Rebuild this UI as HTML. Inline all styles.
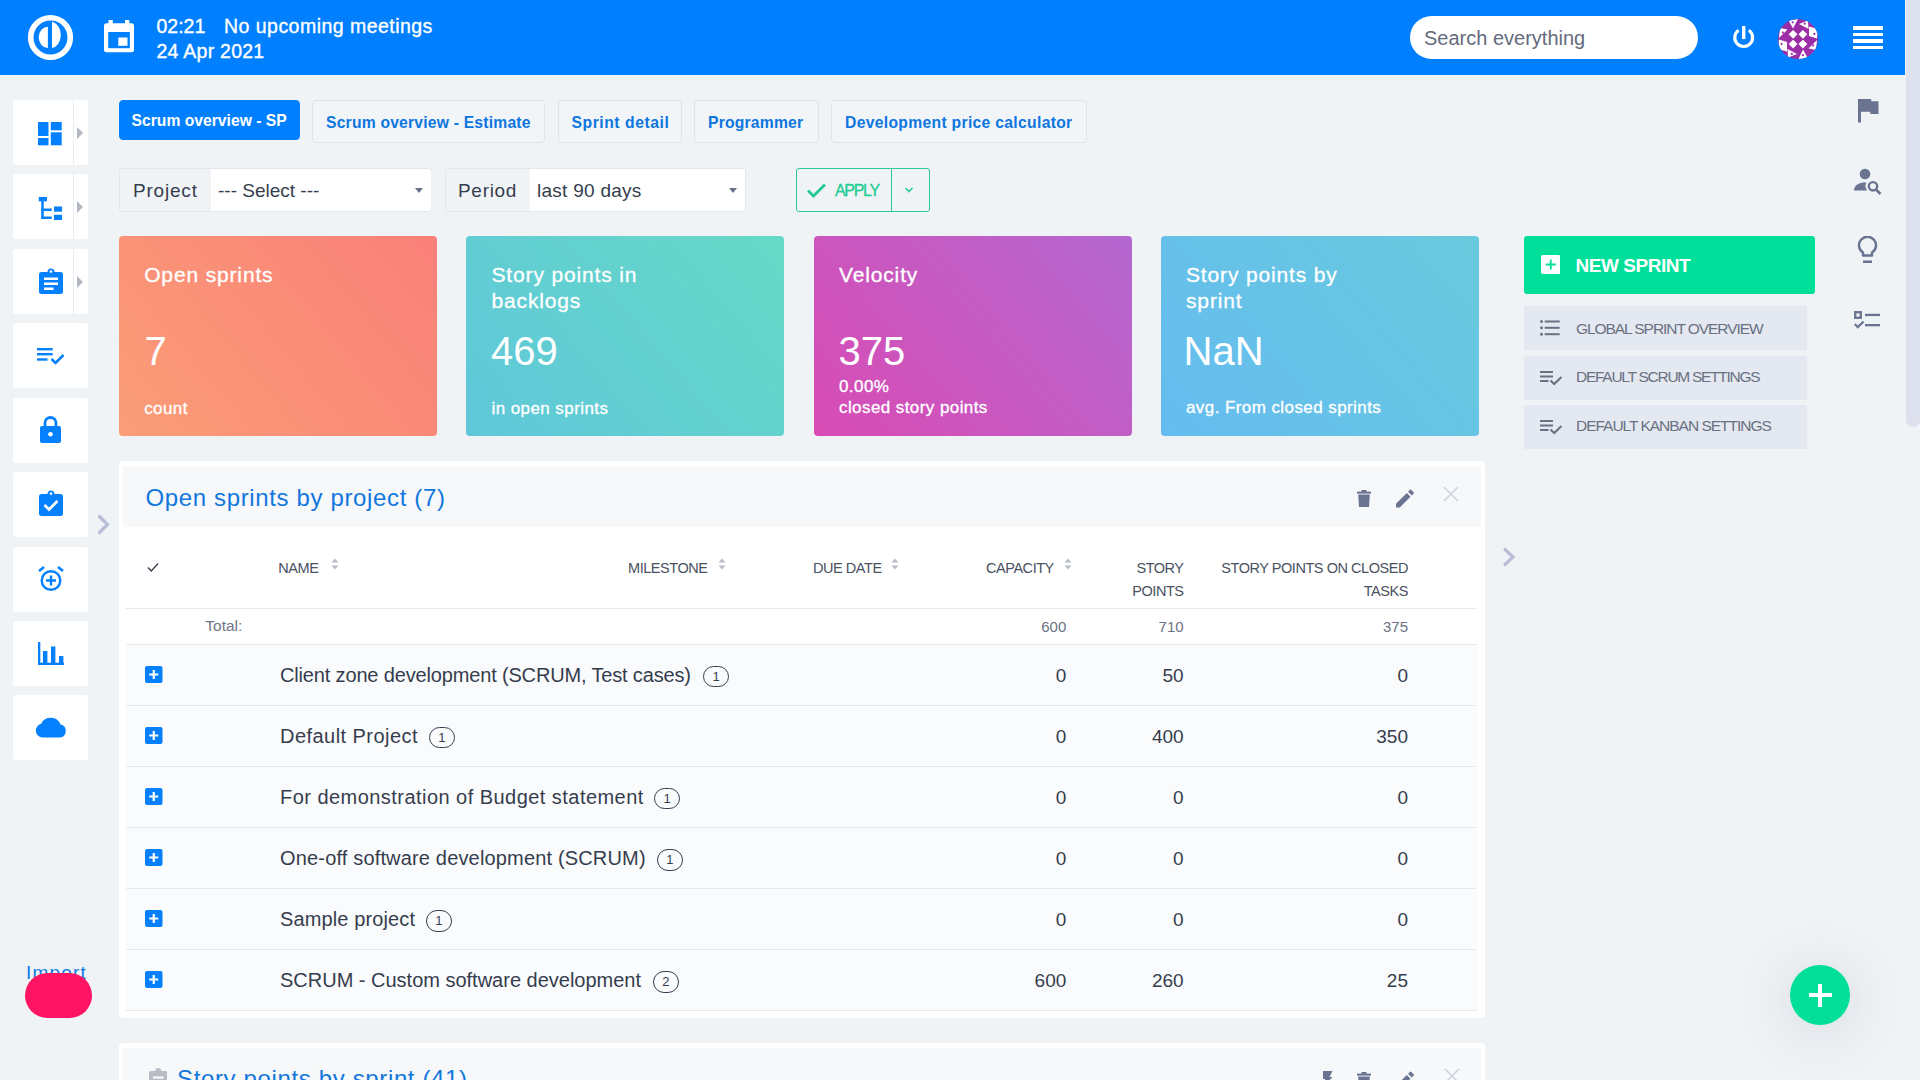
<!DOCTYPE html>
<html><head><meta charset="utf-8">
<style>
*{box-sizing:border-box;margin:0;padding:0}
html,body{width:1920px;height:1080px;overflow:hidden}
body{background:#eff3f6;font-family:"Liberation Sans",sans-serif;position:relative;color:#353d4d}
.abs{position:absolute}
.t{position:absolute;line-height:1;white-space:nowrap;top:calc(var(--b) - 0.847em)}
.r{transform:translateX(-100%)}
#hdr{position:absolute;left:0;top:0;width:1905px;height:75px;background:#0080ff}
#sbt{position:absolute;left:1906px;top:0;width:14px;height:427px;background:#dde0ed;border-radius:0 0 7px 7px}
.hw{color:#fff;font-size:19.5px;-webkit-text-stroke:0.35px #fff}
.search{position:absolute;left:1410px;top:16px;width:288px;height:43px;background:#fff;border-radius:22px}
.tile{position:absolute;left:13px;width:75px;height:65px;background:#fff;border-radius:3px}
.tile .dv{position:absolute;left:60px;top:0;width:1px;height:65px;background:#e9ecf0}
.tile .arr{position:absolute;left:64px;top:27px;width:0;height:0;border-left:6px solid #b4b8c4;border-top:6px solid transparent;border-bottom:6px solid transparent}
.tile svg{position:absolute}
.tab{position:absolute;top:100px;height:43px;border:1px solid #dfe3e9;border-radius:4px;background:#f2f5f8}
.tab.act{background:#0080ff;border-color:#0080ff;height:40px}
.tabt{font-weight:bold;font-size:15.7px;color:#0d76e0;--b:126.3px}
.card{position:absolute;top:236px;width:318px;height:200px;border-radius:4px}
.cw{color:#fff;-webkit-text-stroke:0.3px #fff}
.ct{font-size:21px;letter-spacing:0.85px}
.cv{font-size:40px;--b:365.3px;-webkit-text-stroke:0}
.cs{font-size:17px;letter-spacing:0.42px}
.flt{position:absolute;top:168px;height:44px;background:#f1f4f7;border:1px solid #e3e7ec;border-radius:3px}
.sel{position:absolute;top:169px;height:42px;background:#fff;border-radius:0 3px 3px 0}
.caret{position:absolute;width:0;height:0;border-top:5px solid #67718a;border-left:4.5px solid transparent;border-right:4.5px solid transparent}
.ft{font-size:19px;color:#353d4d;--b:197px}
.rmi{position:absolute;left:1524px;width:283px;height:44px;background:#e4e8f0}
.rmt{font-size:15.5px;color:#697183;letter-spacing:-0.95px}
.ri svg{position:absolute}
.th{font-size:14.5px;color:#4a5162;letter-spacing:-0.45px}
.tot{font-size:15.5px;color:#6e7687}
.totn{font-size:15px;color:#6b7282}
.rn{font-size:20px;color:#353d4d;letter-spacing:0.1px}
.rv{font-size:19px;color:#353d4d}
.bdg{position:absolute;font-size:13px;border:1.2px solid #353d4d;border-radius:11px;width:25.5px;height:21.5px;text-align:center;line-height:20px;color:#353d4d}

</style></head><body>
<div id="hdr"></div>
<svg class="abs" style="left:27px;top:14px" width="47" height="47" viewBox="0 0 47 47">
  <circle cx="23.5" cy="23.5" r="19.8" fill="none" stroke="#fff" stroke-width="5.6"/>
  <path d="M20.9 12.7 A9.2 10.65 0 0 0 20.9 34 Z" fill="#fff"/>
  <path d="M25 7.8 L25 34 A9.8 13.1 0 0 0 25.8 8.1 Z" fill="#fff"/>
</svg>
<svg class="abs" style="left:104px;top:20px" width="30" height="33" viewBox="0 0 30 33">
  <rect x="4.5" y="0" width="4.3" height="5" fill="#fff"/>
  <rect x="21" y="0" width="4.3" height="5" fill="#fff"/>
  <rect x="0" y="3.2" width="30" height="29" rx="2.5" fill="#fff"/>
  <rect x="4.2" y="12" width="21.7" height="16.2" fill="#0080ff"/>
  <rect x="14.3" y="17.5" width="9.2" height="8.3" fill="#fff"/>
</svg>
<div class="t hw" style="left:156.5px;--b:33.2px">02:21</div>
<div class="t hw" style="left:224px;--b:33.2px;letter-spacing:0.47px">No upcoming meetings</div>
<div class="t hw" style="left:156.5px;--b:58.2px;letter-spacing:0.25px">24 Apr 2021</div>
<div class="search"></div>
<div class="t" style="left:1424px;--b:45px;font-size:20px;color:#646b7c">Search everything</div>
<!-- power -->
<svg class="abs" style="left:1730px;top:22px" width="28" height="30" viewBox="0 0 28 30">
  <path d="M8.60 8.31 A8.9 8.9 0 1 0 18.80 8.31" fill="none" stroke="#fff" stroke-width="3.2"/>
  <rect x="12" y="4" width="3.4" height="13.1" fill="#fff"/>
</svg>
<!-- avatar -->
<svg class="abs" style="left:1778px;top:19px" width="40" height="40" viewBox="0 0 40 40">
  <defs><clipPath id="av"><circle cx="20" cy="20" r="20"/></clipPath></defs>
  <g clip-path="url(#av)">
    <rect width="40" height="40" fill="#9b2ea7"/>
    <g fill="#fff">
      <path d="M15.1 10.9 L19.5 15.3 L15.1 19.7 L10.7 15.3Z"/><path d="M24.9 10.9 L29.3 15.3 L24.9 19.7 L20.5 15.3Z"/>
      <path d="M15.1 20.7 L19.5 25.1 L15.1 29.5 L10.7 25.1Z"/><path d="M24.9 20.7 L29.3 25.1 L24.9 29.5 L20.5 25.1Z"/>
      <path d="M10.5 1.5 L20 0 L15 9.5Z"/>
      <path d="M21 5 L30 1.5 L30.5 10Z"/>
      <path d="M31 7.5 L40 10 L39 19.5 L31 17Z"/>
      <path d="M39 21 L30.5 29.5 L38 31Z"/>
      <path d="M30 39.5 L20.5 40 L25 30.5Z"/>
      <path d="M19 35 L10 38.5 L9.5 30Z"/>
      <path d="M9 32.5 L0 30 L1 20.5 L9 23Z"/>
      <path d="M1 19 L9.5 10.5 L2 9Z"/>
    </g>
    <g fill="#9b2ea7">
      <circle cx="14.7" cy="3.3" r="1.1"/><circle cx="26.7" cy="4.7" r="1.1"/><circle cx="36.4" cy="14.9" r="1.1"/><circle cx="35.1" cy="26.4" r="1.1"/>
      <circle cx="24.9" cy="36.2" r="1.1"/><circle cx="13.8" cy="34.9" r="1.1"/><circle cx="3.6" cy="25.1" r="1.1"/><circle cx="4.9" cy="13.6" r="1.1"/>
    </g>
  </g>
</svg>
<!-- hamburger -->
<div class="abs" style="left:1853px;top:26px;width:30px;height:3.6px;background:#fff"></div>
<div class="abs" style="left:1853px;top:32.5px;width:30px;height:3.6px;background:#fff"></div>
<div class="abs" style="left:1853px;top:39px;width:30px;height:3.6px;background:#fff"></div>
<div class="abs" style="left:1853px;top:45.5px;width:30px;height:3.6px;background:#fff"></div>

<div id="sbt"></div>

<!-- SIDEBAR -->
<div class="tile" style="top:100px"><div class="dv"></div><div class="arr"></div>
  <svg style="left:25px;top:21.7px" width="24" height="24" viewBox="0 0 24 24"><g fill="#0580fc"><rect x="0" y="0" width="10.5" height="14"/><rect x="0" y="16" width="10.5" height="7.3"/><rect x="12.8" y="0" width="10.9" height="8.3"/><rect x="12.8" y="10.3" width="10.9" height="13"/></g></svg>
</div>
<div class="tile" style="top:174px"><div class="dv"></div><div class="arr"></div>
  <svg style="left:25px;top:23px" width="25" height="23" viewBox="0 0 25 23"><g fill="#0580fc"><rect x="0.75" y="0" width="8.25" height="4.3"/><rect x="3.25" y="4" width="2.5" height="18"/><rect x="3.25" y="11.5" width="10.5" height="2.5"/><rect x="3.25" y="19.5" width="10.5" height="2.5"/><rect x="16" y="9.5" width="8" height="5.2"/><rect x="16" y="17.8" width="8" height="5.2"/></g></svg>
</div>
<div class="tile" style="top:249px"><div class="dv"></div><div class="arr"></div>
  <svg style="left:25.75px;top:19px" width="24" height="26" viewBox="0 0 24 26"><path d="M2.5 4 H8.5 A3.5 3.5 0 0 1 15.5 4 H21.5 A2.5 2.5 0 0 1 24 6.5 V23.5 A2.5 2.5 0 0 1 21.5 26 H2.5 A2.5 2.5 0 0 1 0 23.5 V6.5 A2.5 2.5 0 0 1 2.5 4Z" fill="#0580fc"/><circle cx="12" cy="3.6" r="1.3" fill="#fff"/><g fill="#fff"><rect x="5" y="9.5" width="14" height="2.5"/><rect x="5" y="14.5" width="14" height="2.5"/><rect x="5" y="19.5" width="9.5" height="2.5"/></g></svg>
</div>
<div class="tile" style="top:323px">
  <svg style="left:24px;top:25px" width="28" height="17" viewBox="0 0 28 17"><g fill="#0580fc"><rect x="0" y="0" width="15.7" height="2.4"/><rect x="0" y="5" width="15.7" height="2.4"/><rect x="0" y="10.3" width="10.5" height="2.4"/></g><path d="M14.5 11 L18.5 15 L26.5 7" fill="none" stroke="#0580fc" stroke-width="2.5"/></svg>
</div>
<div class="tile" style="top:398px">
  <svg style="left:27px;top:18px" width="21" height="27" viewBox="0 0 21 27"><path d="M5 10 V7 A5.5 5.5 0 0 1 16 7 V10" fill="none" stroke="#0580fc" stroke-width="2.8"/><rect x="0" y="10" width="21" height="17" rx="2" fill="#0580fc"/><circle cx="10.5" cy="18.2" r="2.3" fill="#fff"/></svg>
</div>
<div class="tile" style="top:472px">
  <svg style="left:25.75px;top:17.9px" width="24" height="26" viewBox="0 0 24 26"><path d="M2.5 4 H8.5 A3.5 3.5 0 0 1 15.5 4 H21.5 A2.5 2.5 0 0 1 24 6.5 V23.5 A2.5 2.5 0 0 1 21.5 26 H2.5 A2.5 2.5 0 0 1 0 23.5 V6.5 A2.5 2.5 0 0 1 2.5 4Z" fill="#0580fc"/><circle cx="12" cy="3.6" r="1.3" fill="#fff"/><path d="M5.5 15 L10 19.5 L18.5 11" fill="none" stroke="#fff" stroke-width="2.7"/></svg>
</div>
<div class="tile" style="top:547px">
  <svg style="left:25px;top:18.6px" width="26" height="26" viewBox="0 0 26 26"><circle cx="13" cy="14.5" r="9.3" fill="none" stroke="#0580fc" stroke-width="2.4"/><path d="M1 5 L6 1" stroke="#0580fc" stroke-width="2.6"/><path d="M25 5 L20 1" stroke="#0580fc" stroke-width="2.6"/><path d="M13 9.5 V19.5 M8 14.5 H18" stroke="#0580fc" stroke-width="2.4"/></svg>
</div>
<div class="tile" style="top:621px">
  <svg style="left:24.7px;top:21px" width="26" height="23" viewBox="0 0 26 23"><g fill="#0580fc"><rect x="0" y="0" width="2.3" height="23"/><rect x="0" y="20.7" width="26" height="2.3"/><rect x="5" y="9" width="4.4" height="13"/><rect x="13" y="4.5" width="4.4" height="17"/><rect x="21" y="14" width="4.4" height="8"/></g></svg>
</div>
<div class="tile" style="top:695px">
  <svg style="left:22px;top:21px" width="32" height="22" viewBox="0 0 32 22"><path d="M7.5 21.5 A7 7 0 0 1 6.2 7.7 A10.5 10.5 0 0 1 25.5 8.5 A6.6 6.6 0 0 1 25 21.5 Z" fill="#0580fc"/></svg>
</div>
<svg class="abs" style="left:96px;top:513px" width="16" height="23" viewBox="0 0 16 23"><path d="M3.5 3.5 L11.5 11.5 L3.5 19.5" fill="none" stroke="#b9bdd8" stroke-width="3.2" stroke-linecap="round"/></svg>
<svg class="abs" style="left:1501px;top:546px" width="17" height="22" viewBox="0 0 17 22"><path d="M4 3.5 L12 11 L4 18.5" fill="none" stroke="#b9bdd8" stroke-width="3.2" stroke-linecap="round"/></svg>
<div class="t" style="left:26px;--b:979px;font-size:19px;color:#0d7ae8;letter-spacing:1.2px">Import</div>
<div class="abs" style="left:25px;top:973px;width:67px;height:45px;border-radius:23px;background:#ff1463"></div>
<div class="abs" style="left:1790px;top:965px;width:60px;height:60px;border-radius:30px;background:#03df99;box-shadow:0 6px 60px rgba(40,50,70,0.15)"></div>
<div class="abs" style="left:1808.5px;top:993.2px;width:23px;height:3.7px;background:#fff"></div>
<div class="abs" style="left:1818.2px;top:983.5px;width:3.7px;height:23px;background:#fff"></div>


<!-- TABS -->
<div class="tab act" style="left:119px;width:181px"></div>
<div class="t tabt" style="left:131.5px;color:#fff">Scrum overview - SP</div>
<div class="tab" style="left:312px;width:233px"></div>
<div class="t tabt" style="--b:128px;left:326px;letter-spacing:0.2px">Scrum overview - Estimate</div>
<div class="tab" style="left:558px;width:124px"></div>
<div class="t tabt" style="--b:128px;left:571.5px;letter-spacing:0.55px">Sprint detail</div>
<div class="tab" style="left:694px;width:125px"></div>
<div class="t tabt" style="--b:128px;left:708px;letter-spacing:0.2px">Programmer</div>
<div class="tab" style="left:831px;width:256px"></div>
<div class="t tabt" style="--b:128px;left:845px;letter-spacing:0.31px">Development price calculator</div>

<!-- FILTERS -->
<div class="flt" style="left:119px;width:312px"></div>
<div class="sel" style="left:210.5px;width:220px"></div>
<div class="t ft" style="left:133px;letter-spacing:0.8px">Project</div>
<div class="t ft" style="left:218px">--- Select ---</div>
<div class="caret" style="left:414.5px;top:187.5px"></div>
<div class="flt" style="left:444.5px;width:301px"></div>
<div class="sel" style="left:530px;width:215px"></div>
<div class="t ft" style="left:458px;letter-spacing:0.7px">Period</div>
<div class="t ft" style="left:537px;letter-spacing:0.27px">last 90 days</div>
<div class="caret" style="left:729px;top:187.5px"></div>
<div class="abs" style="left:796px;top:168px;width:134px;height:44px;border:1.3px solid #2cc996;border-radius:3px"></div>
<div class="abs" style="left:891px;top:168px;width:1.3px;height:44px;background:#2cc996"></div>
<svg class="abs" style="left:806px;top:182px" width="21" height="17" viewBox="0 0 21 17"><path d="M2 8.5 L7.5 14 L19 2.5" fill="none" stroke="#23c891" stroke-width="2.8"/></svg>
<div class="t" style="left:835px;--b:197px;font-size:16px;color:#22cc92;letter-spacing:-1.3px;-webkit-text-stroke:0.3px #22cc92">APPLY</div>
<svg class="abs" style="left:904px;top:186px" width="10" height="8" viewBox="0 0 10 8"><path d="M1.5 2 L5 5.5 L8.5 2" fill="none" stroke="#2bc994" stroke-width="1.6"/></svg>

<!-- CARDS -->
<div class="card" style="left:119px;background:linear-gradient(50deg,#fa9d76,#fa8079)"></div>
<div class="t cw ct" style="left:144.2px;--b:281.8px">Open sprints</div>
<div class="t cw cv" style="left:144.5px">7</div>
<div class="t cw cs" style="left:144.2px;--b:414px">count</div>

<div class="card" style="left:466px;background:linear-gradient(50deg,#5fc7da,#66d9c6)"></div>
<div class="t cw ct" style="left:491.5px;--b:281.8px">Story points in</div>
<div class="t cw ct" style="left:491.5px;--b:308px">backlogs</div>
<div class="t cw cv" style="left:491px">469</div>
<div class="t cw cs" style="left:491.5px;--b:414px">in open sprints</div>

<div class="card" style="left:814px;background:linear-gradient(50deg,#d94bb4,#b468d0)"></div>
<div class="t cw ct" style="left:839px;--b:281.8px">Velocity</div>
<div class="t cw cv" style="left:838.5px">375</div>
<div class="t cw cs" style="left:839px;--b:392.4px">0.00%</div>
<div class="t cw cs" style="left:839px;--b:413.5px">closed story points</div>

<div class="card" style="left:1161px;background:linear-gradient(50deg,#65bcf0,#68cadd)"></div>
<div class="t cw ct" style="left:1186px;--b:281.8px">Story points by</div>
<div class="t cw ct" style="left:1186px;--b:308px">sprint</div>
<div class="t cw cv" style="left:1183.5px">NaN</div>
<div class="t cw cs" style="left:1186px;--b:413.5px">avg. From closed sprints</div>

<!-- RIGHT MENU -->
<div class="abs" style="left:1524px;top:236px;width:291px;height:58px;background:#00df9a;border-radius:3px"></div>
<svg class="abs" style="left:1540.5px;top:255px" width="19.5" height="19" viewBox="0 0 19.5 19"><rect width="19.5" height="19" rx="2" fill="#fff"/><path d="M9.75 4.5 V14.5 M4.75 9.5 H14.75" stroke="#00df9a" stroke-width="1.8"/></svg>
<div class="t" style="left:1575.5px;--b:272px;font-size:19px;font-weight:bold;color:#fff;letter-spacing:-0.45px">NEW SPRINT</div>
<div class="rmi" style="top:306px"></div>
<div class="rmi" style="top:355.5px"></div>
<div class="rmi" style="top:404.5px"></div>
<svg class="abs" style="left:1540px;top:320px" width="20" height="16" viewBox="0 0 20 16"><g fill="#697183"><circle cx="1.5" cy="1.5" r="1.5"/><circle cx="1.5" cy="7.8" r="1.5"/><circle cx="1.5" cy="14.2" r="1.5"/><rect x="4.7" y="0.5" width="15" height="2"/><rect x="4.7" y="6.8" width="15" height="2"/><rect x="4.7" y="13.2" width="15" height="2"/></g></svg>
<div class="t rmt" style="left:1576px;--b:334.4px;letter-spacing:-1.06px">GLOBAL SPRINT OVERVIEW</div>
<svg class="abs" style="left:1539.5px;top:371px" width="23" height="15" viewBox="0 0 23 15"><g fill="#697183"><rect x="0" y="0" width="13" height="2"/><rect x="0" y="4.5" width="13" height="2"/><rect x="0" y="9" width="8.5" height="2"/></g><path d="M10.5 9.5 L14.2 13 L21.5 6" fill="none" stroke="#697183" stroke-width="2"/></svg>
<div class="t rmt" style="left:1576px;--b:382.1px;letter-spacing:-1.27px">DEFAULT SCRUM SETTINGS</div>
<svg class="abs" style="left:1539.5px;top:420px" width="23" height="15" viewBox="0 0 23 15"><g fill="#697183"><rect x="0" y="0" width="13" height="2"/><rect x="0" y="4.5" width="13" height="2"/><rect x="0" y="9" width="8.5" height="2"/></g><path d="M10.5 9.5 L14.2 13 L21.5 6" fill="none" stroke="#697183" stroke-width="2"/></svg>
<div class="t rmt" style="left:1576px;--b:430.8px;letter-spacing:-1.02px">DEFAULT KANBAN SETTINGS</div>
<!-- right icons -->
<svg class="abs" style="left:1858px;top:99px" width="21" height="24" viewBox="0 0 21 24"><path d="M0 0 H13 L13.5 2.2 H20.5 V15 H12.5 L12 12.8 H3 V23.5 H0 Z" fill="#6a7491"/></svg>
<svg class="abs" style="left:1854px;top:168px" width="28" height="27" viewBox="0 0 28 27"><g fill="#6a7491"><circle cx="11" cy="6" r="5.3"/><path d="M0 22.5 C0 17 5.5 14.5 11 14.5 C11.5 14.5 12 14.5 12.5 14.6 A7 7 0 0 0 13.2 22.5 Z"/></g><circle cx="19" cy="18.3" r="4.2" fill="none" stroke="#6a7491" stroke-width="2.4"/><path d="M22 21.5 L26.5 26" stroke="#6a7491" stroke-width="2.6"/></svg>
<svg class="abs" style="left:1857px;top:236px" width="21" height="28" viewBox="0 0 21 28"><path d="M6 19.5 V16.5 A8.5 8.5 0 1 1 15 16.5 V19.5 Z" fill="none" stroke="#6a7491" stroke-width="2.5" stroke-linejoin="round"/><rect x="6" y="24.5" width="9" height="2.5" fill="#6a7491"/></svg>
<svg class="abs" style="left:1854px;top:310.5px" width="26" height="19" viewBox="0 0 26 19"><rect x="1.2" y="1.2" width="5.6" height="5.6" fill="none" stroke="#6a7491" stroke-width="2.3"/><rect x="11" y="2.8" width="15" height="2.3" fill="#6a7491"/><rect x="11" y="13" width="15" height="2.3" fill="#6a7491"/><path d="M0.8 13 L3.8 16.2 L9.5 10.5" fill="none" stroke="#6a7491" stroke-width="2.3"/></svg>


<!-- MODULE -->
<div class="abs" style="left:119px;top:461px;width:1366px;height:557px;background:#fff;border-radius:4px"></div>
<div class="abs" style="left:123px;top:466px;width:1358px;height:61px;background:#f6f8fa"></div>
<div class="abs" style="left:123px;top:527px;width:1358px;height:81px;background:#fff"></div>
<div class="abs" style="left:123px;top:608px;width:1358px;height:406px;background:#fff"></div>
<div class="abs" style="left:126px;top:645px;width:1351px;height:366px;background:#fafbfd"></div>
<div class="t" style="left:145.5px;--b:506.3px;font-size:24px;color:#1277dd;letter-spacing:0.64px">Open sprints by project (7)</div>
<svg class="abs" style="left:1357px;top:489.5px" width="14" height="17" viewBox="0 0 14 17"><g fill="#6a7491"><rect x="0" y="1.6" width="14" height="2"/><rect x="4.5" y="0" width="5" height="2"/><path d="M1.2 4.5 H12.8 L12 17 H2 Z"/></g></svg>
<svg class="abs" style="left:1396px;top:489px" width="19" height="19" viewBox="0 0 19 19"><path d="M0 14.8 V18.5 H3.7 L14.5 7.7 L10.8 4 Z M17.6 4.6 A1 1 0 0 0 17.6 3.2 L15.3 0.9 A1 1 0 0 0 13.9 0.9 L12.1 2.7 L15.8 6.4 Z" fill="#6a7491"/></svg>
<svg class="abs" style="left:1443px;top:485.5px" width="16" height="16" viewBox="0 0 16 16"><path d="M1 1 L15 15 M15 1 L1 15" stroke="#cdd2de" stroke-width="1.5"/></svg>
<div class="abs" style="left:126px;top:608px;width:1351px;height:1px;background:#e6e9ee"></div>
<div class="abs" style="left:126px;top:644px;width:1351px;height:1px;background:#e6e9ee"></div>
<svg class="abs" style="left:147px;top:562px" width="12" height="11" viewBox="0 0 12 11"><path d="M1 5.5 L4.3 9 L11 1.5" fill="none" stroke="#3a4150" stroke-width="1.4"/></svg>
<div class="t th" style="left:278.3px;--b:573.5px">NAME</div>
<svg class="abs" style="left:330.5px;top:557.6px" width="8" height="12" viewBox="0 0 8 12"><path d="M0.5 4.5 L4 0.5 L7.5 4.5Z M0.5 7.5 L4 11.5 L7.5 7.5Z" fill="#b9bdc8"/></svg>
<div class="t th" style="left:628px;--b:573.5px">MILESTONE</div>
<svg class="abs" style="left:718px;top:557.6px" width="8" height="12" viewBox="0 0 8 12"><path d="M0.5 4.5 L4 0.5 L7.5 4.5Z M0.5 7.5 L4 11.5 L7.5 7.5Z" fill="#b9bdc8"/></svg>
<div class="t th" style="left:813px;--b:573.5px">DUE DATE</div>
<svg class="abs" style="left:891px;top:557.6px" width="8" height="12" viewBox="0 0 8 12"><path d="M0.5 4.5 L4 0.5 L7.5 4.5Z M0.5 7.5 L4 11.5 L7.5 7.5Z" fill="#b9bdc8"/></svg>
<div class="t th" style="left:986px;--b:573.5px">CAPACITY</div>
<svg class="abs" style="left:1064px;top:557.6px" width="8" height="12" viewBox="0 0 8 12"><path d="M0.5 4.5 L4 0.5 L7.5 4.5Z M0.5 7.5 L4 11.5 L7.5 7.5Z" fill="#b9bdc8"/></svg>
<div class="t r th" style="left:1183.6px;--b:573.5px">STORY</div>
<div class="t r th" style="left:1183.6px;--b:596.5px">POINTS</div>
<div class="t r th" style="left:1408px;--b:573.5px">STORY POINTS ON CLOSED</div>
<div class="t r th" style="left:1408px;--b:596.5px">TASKS</div>
<div class="t tot" style="left:205.3px;--b:631.5px">Total:</div>
<div class="t r totn" style="left:1066.3px;--b:631.4px">600</div>
<div class="t r totn" style="left:1183.6px;--b:631.4px">710</div>
<div class="t r totn" style="left:1408px;--b:631.4px">375</div>
<div class="abs" style="left:126px;top:705px;width:1351px;height:1px;background:#e6e9ee"></div>
<svg class="abs" style="left:145.2px;top:665.9px" width="17.5" height="17" viewBox="0 0 17.5 17"><rect width="17.5" height="17" rx="2" fill="#0580fc"/><path d="M8.75 4 V13 M4.25 8.5 H13.25" stroke="#fff" stroke-width="2.2"/></svg>
<div class="t rn" style="left:280px;--b:681.9px;letter-spacing:-0.157px">Client zone development (SCRUM, Test cases)</div><div class="bdg" style="left:703.3px;top:665.7px">1</div>
<div class="t r rv" style="left:1066.3px;--b:681.9px">0</div>
<div class="t r rv" style="left:1183.6px;--b:681.9px">50</div>
<div class="t r rv" style="left:1408px;--b:681.9px">0</div>
<div class="abs" style="left:126px;top:766px;width:1351px;height:1px;background:#e6e9ee"></div>
<svg class="abs" style="left:145.2px;top:727.0px" width="17.5" height="17" viewBox="0 0 17.5 17"><rect width="17.5" height="17" rx="2" fill="#0580fc"/><path d="M8.75 4 V13 M4.25 8.5 H13.25" stroke="#fff" stroke-width="2.2"/></svg>
<div class="t rn" style="left:280px;--b:743.0px;letter-spacing:0.452px">Default Project</div><div class="bdg" style="left:429.2px;top:726.8px">1</div>
<div class="t r rv" style="left:1066.3px;--b:743.0px">0</div>
<div class="t r rv" style="left:1183.6px;--b:743.0px">400</div>
<div class="t r rv" style="left:1408px;--b:743.0px">350</div>
<div class="abs" style="left:126px;top:827px;width:1351px;height:1px;background:#e6e9ee"></div>
<svg class="abs" style="left:145.2px;top:788.1px" width="17.5" height="17" viewBox="0 0 17.5 17"><rect width="17.5" height="17" rx="2" fill="#0580fc"/><path d="M8.75 4 V13 M4.25 8.5 H13.25" stroke="#fff" stroke-width="2.2"/></svg>
<div class="t rn" style="left:280px;--b:804.1px;letter-spacing:0.457px">For demonstration of Budget statement</div><div class="bdg" style="left:654.3px;top:787.9px">1</div>
<div class="t r rv" style="left:1066.3px;--b:804.1px">0</div>
<div class="t r rv" style="left:1183.6px;--b:804.1px">0</div>
<div class="t r rv" style="left:1408px;--b:804.1px">0</div>
<div class="abs" style="left:126px;top:888px;width:1351px;height:1px;background:#e6e9ee"></div>
<svg class="abs" style="left:145.2px;top:849.2px" width="17.5" height="17" viewBox="0 0 17.5 17"><rect width="17.5" height="17" rx="2" fill="#0580fc"/><path d="M8.75 4 V13 M4.25 8.5 H13.25" stroke="#fff" stroke-width="2.2"/></svg>
<div class="t rn" style="left:280px;--b:865.2px;letter-spacing:0.166px">One-off software development (SCRUM)</div><div class="bdg" style="left:657.2px;top:849.0px">1</div>
<div class="t r rv" style="left:1066.3px;--b:865.2px">0</div>
<div class="t r rv" style="left:1183.6px;--b:865.2px">0</div>
<div class="t r rv" style="left:1408px;--b:865.2px">0</div>
<div class="abs" style="left:126px;top:949px;width:1351px;height:1px;background:#e6e9ee"></div>
<svg class="abs" style="left:145.2px;top:910.3px" width="17.5" height="17" viewBox="0 0 17.5 17"><rect width="17.5" height="17" rx="2" fill="#0580fc"/><path d="M8.75 4 V13 M4.25 8.5 H13.25" stroke="#fff" stroke-width="2.2"/></svg>
<div class="t rn" style="left:280px;--b:926.3px;letter-spacing:0.123px">Sample project</div><div class="bdg" style="left:426px;top:910.1px">1</div>
<div class="t r rv" style="left:1066.3px;--b:926.3px">0</div>
<div class="t r rv" style="left:1183.6px;--b:926.3px">0</div>
<div class="t r rv" style="left:1408px;--b:926.3px">0</div>
<div class="abs" style="left:126px;top:1010px;width:1351px;height:1px;background:#e6e9ee"></div>
<svg class="abs" style="left:145.2px;top:971.4px" width="17.5" height="17" viewBox="0 0 17.5 17"><rect width="17.5" height="17" rx="2" fill="#0580fc"/><path d="M8.75 4 V13 M4.25 8.5 H13.25" stroke="#fff" stroke-width="2.2"/></svg>
<div class="t rn" style="left:280px;--b:987.4px;letter-spacing:-0.007px">SCRUM - Custom software development</div><div class="bdg" style="left:653px;top:971.2px">2</div>
<div class="t r rv" style="left:1066.3px;--b:987.4px">600</div>
<div class="t r rv" style="left:1183.6px;--b:987.4px">260</div>
<div class="t r rv" style="left:1408px;--b:987.4px">25</div>
<div class="abs" style="left:119px;top:1043px;width:1366px;height:100px;background:#fff;border-radius:4px"></div>
<div class="abs" style="left:123px;top:1048px;width:1358px;height:40px;background:#f6f8fa"></div>
<svg class="abs" style="left:148.5px;top:1067.5px" width="18.5" height="20" viewBox="0 0 18.5 20"><path d="M2 3 H6.2 A3 3 0 0 1 12.2 3 H16.5 A2 2 0 0 1 18.5 5 V20 H0 V5 A2 2 0 0 1 2 3Z" fill="#b9bcc4"/><g fill="#fff"><rect x="4" y="8.5" width="10.5" height="2"/><rect x="4" y="12.5" width="10.5" height="2"/></g></svg>
<div class="t" style="left:177px;--b:1087.5px;font-size:24px;color:#1277dd;letter-spacing:0.64px">Story points by sprint (41)</div>
<svg class="abs" style="left:1323px;top:1071px" width="10" height="14" viewBox="0 0 10 14"><path d="M0 0 H9.5 L6.5 6 H9.5 L2 14 V8 H0Z" fill="#6a7491"/></svg>
<svg class="abs" style="left:1357px;top:1071.5px" width="14" height="17" viewBox="0 0 14 17"><g fill="#6a7491"><rect x="0" y="1.6" width="14" height="2"/><rect x="4.5" y="0" width="5" height="2"/><path d="M1.2 4.5 H12.8 L12 17 H2 Z"/></g></svg>
<svg class="abs" style="left:1396px;top:1071px" width="19" height="19" viewBox="0 0 19 19"><path d="M0 14.8 V18.5 H3.7 L14.5 7.7 L10.8 4 Z M17.6 4.6 A1 1 0 0 0 17.6 3.2 L15.3 0.9 A1 1 0 0 0 13.9 0.9 L12.1 2.7 L15.8 6.4 Z" fill="#6a7491"/></svg>
<svg class="abs" style="left:1443.5px;top:1067.5px" width="16" height="16" viewBox="0 0 16 16"><path d="M1 1 L15 15 M15 1 L1 15" stroke="#cdd2de" stroke-width="1.5"/></svg>


</body></html>
